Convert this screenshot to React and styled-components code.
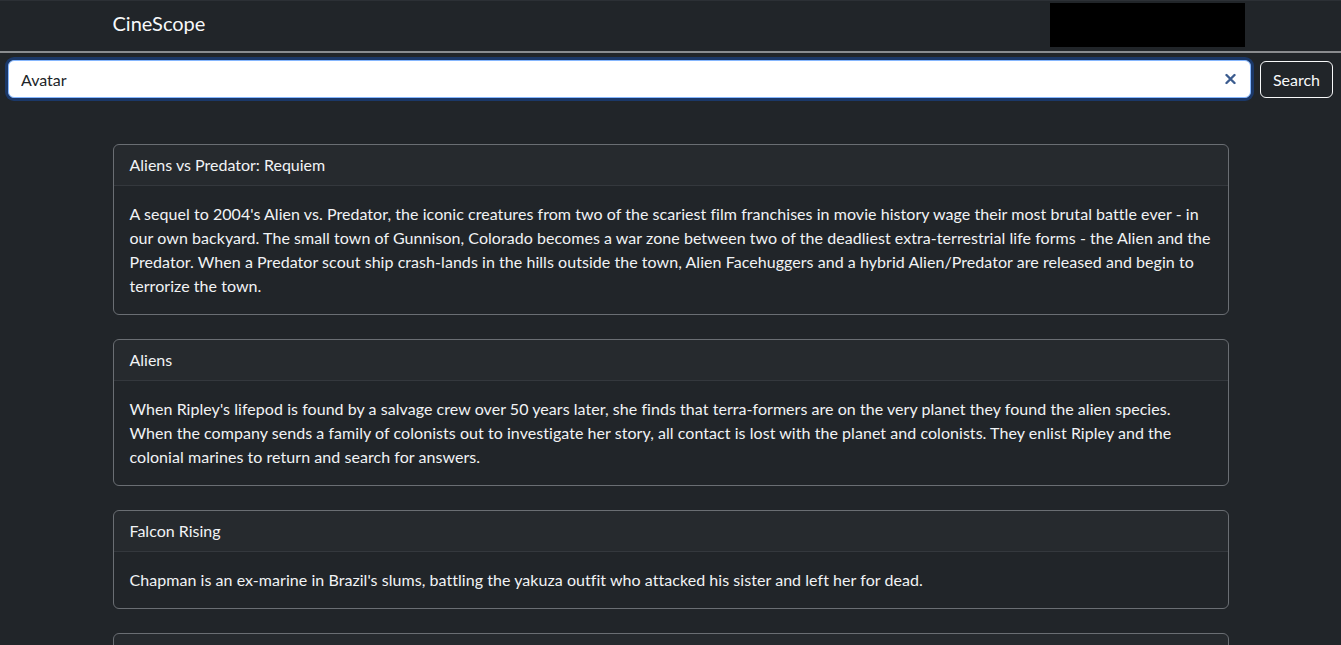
import React, { useState } from 'react'
import styled, { createGlobalStyle } from 'styled-components'

const GlobalStyle = createGlobalStyle`
  html, body {
    margin: 0;
    padding: 0;
    background: #212529;
    color: #dee2e6;
    font-family: Lato, "Open Sans", sans-serif;
    font-size: 16px;
    line-height: 1.5;
  }
  * { box-sizing: border-box; }
`

const movies = [
  {
    id: 1,
    title: 'Aliens vs Predator: Requiem',
    overview: "A sequel to 2004's Alien vs. Predator, the iconic creatures from two of the scariest film franchises in movie history wage their most brutal battle ever - in our own backyard. The small town of Gunnison, Colorado becomes a war zone between two of the deadliest extra-terrestrial life forms - the Alien and the Predator. When a Predator scout ship crash-lands in the hills outside the town, Alien Facehuggers and a hybrid Alien/Predator are released and begin to terrorize the town.",
  },
  {
    id: 2,
    title: 'Aliens',
    overview: "When Ripley's lifepod is found by a salvage crew over 50 years later, she finds that terra-formers are on the very planet they found the alien species. When the company sends a family of colonists out to investigate her story, all contact is lost with the planet and colonists. They enlist Ripley and the colonial marines to return and search for answers.",
  },
  {
    id: 3,
    title: 'Falcon Rising',
    overview: "Chapman is an ex-marine in Brazil's slums, battling the yakuza outfit who attacked his sister and left her for dead.",
  },
  {
    id: 4,
    title: 'Avatar',
    overview: 'In the 22nd century, a paraplegic Marine is dispatched to the moon Pandora on a unique mission, but becomes torn between following orders and protecting an alien civilization.',
  },
]

const App = () => {
  const [query, setQuery] = useState('Avatar')

  return <>
    <GlobalStyle />
    <Navbar>
      <NavInner>
        <Brand href='#'>CineScope</Brand>
        <Account />
      </NavInner>
    </Navbar>
    <SearchForm onSubmit={e => e.preventDefault()}>
      <InputWrap>
        <SearchInput value={query} onChange={e => setQuery(e.target.value)} />
        {query && <ClearButton type='button' onClick={() => setQuery('')}>
          <svg width='11' height='11' viewBox='0 0 11 11'>
            <path d='M1.5 1.5 L9.5 9.5 M9.5 1.5 L1.5 9.5' stroke='currentColor' strokeWidth='2.4' strokeLinecap='round' />
          </svg>
        </ClearButton>}
      </InputWrap>
      <SearchButton type='submit'>Search</SearchButton>
    </SearchForm>
    <Container>
      {movies.map(movie => <Card key={movie.id}>
        <CardHeader>{movie.title}</CardHeader>
        <CardBody>{movie.overview}</CardBody>
      </Card>)}
    </Container>
  </>
}

const Navbar = styled.nav`
  height: 53px;
  border-top: 1px solid #2c3035;
  border-bottom: 2px solid #8a8c8f;
  background: #212529;
`

const NavInner = styled.div`
  max-width: 1140px;
  margin: 0 auto;
  padding: 0 12px;
  height: 100%;
  display: flex;
  align-items: center;
  justify-content: space-between;
`

const Brand = styled.a`
  color: #f8f9fa;
  font-size: 20px;
  text-decoration: none;
  margin-top: -6px;
`

const Account = styled.div`
  width: 195px;
  height: 44px;
  background: #000;
  margin-top: -2px;
  margin-right: -16px;
`

const SearchForm = styled.form`
  display: flex;
  align-items: center;
  gap: 9px;
  padding: 7px 8px 0;
`

const InputWrap = styled.div`
  flex: 1;
  position: relative;
`

const SearchInput = styled.input`
  width: 100%;
  height: 38px;
  padding: 6px 36px 6px 12px;
  font-family: inherit;
  font-size: 16px;
  color: #212529;
  background: #fff;
  border: 1px solid #86b7fe;
  border-radius: 6px;
  box-shadow: 0 0 0 3px #1b3868;
  outline: none;
`

const ClearButton = styled.button`
  position: absolute;
  right: 15px;
  top: 50%;
  transform: translateY(-50%);
  padding: 0;
  border: none;
  background: none;
  color: #3b5c8f;
  display: flex;
  cursor: pointer;
`

const SearchButton = styled.button`
  width: 73px;
  height: 37px;
  padding: 6px 0;
  font-family: inherit;
  font-size: 16px;
  color: #f8f9fa;
  background: transparent;
  border: 1px solid #f8f9fa;
  border-radius: 6px;
  cursor: pointer;
`

const Container = styled.main`
  max-width: 1140px;
  margin: 46px auto 0;
  padding: 0 12px;
`

const Card = styled.section`
  border: 1px solid #6a6e73;
  border-radius: 6px;
  margin-bottom: 24px;
  overflow: hidden;
`

const CardHeader = styled.div`
  padding: 8px 16px;
  background: rgba(222, 226, 230, 0.03);
  border-bottom: 1px solid #34383d;
  color: #f1f3f5;
`

const CardBody = styled.div`
  padding: 16px;
  color: #f1f3f5;
  letter-spacing: 0.05px;
`

export default App
